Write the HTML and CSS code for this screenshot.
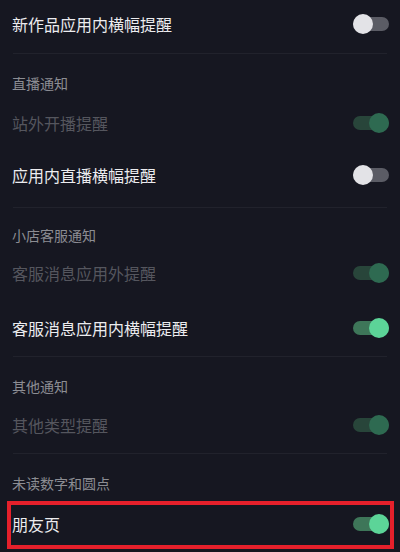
FILE: index.html
```html
<!DOCTYPE html>
<html lang="zh-CN">
<head>
<meta charset="utf-8">
<title>通知设置</title>
<link rel="stylesheet" href="styles.css">
</head>
<body>
<div class="list">
  <div class="row r1"><span class="label">新作品应用内横幅提醒</span><span class="toggle off"><span class="knob"></span></span></div>
  <div class="sep s1"></div>
  <div class="hdr h1">直播通知</div>
  <div class="row dim d1"><span class="label">站外开播提醒</span><span class="toggle ondim"><span class="knob"></span></span></div>
  <div class="row r2"><span class="label">应用内直播横幅提醒</span><span class="toggle off"><span class="knob"></span></span></div>
  <div class="sep"></div>
  <div class="hdr h2">小店客服通知</div>
  <div class="row dim d2"><span class="label">客服消息应用外提醒</span><span class="toggle ondim"><span class="knob"></span></span></div>
  <div class="row r3"><span class="label">客服消息应用内横幅提醒</span><span class="toggle on"><span class="knob"></span></span></div>
  <div class="sep"></div>
  <div class="hdr h3">其他通知</div>
  <div class="row dim d3"><span class="label">其他类型提醒</span><span class="toggle ondim"><span class="knob"></span></span></div>
  <div class="sep s4"></div>
  <div class="hdr h4">未读数字和圆点</div>
  <div class="row r4 marked"><span class="label">朋友页</span><span class="toggle on"><span class="knob"></span></span></div>
</div>
</body>
</html>
```
FILE: styles.css
```css
html, body {
  margin: 0;
  padding: 0;
  background: #161721;
}
body {
  width: 400px;
  height: 552px;
  overflow: hidden;
  font-family: "Noto Sans CJK SC", "Noto Sans", sans-serif;
}
.list {
  display: flex;
  flex-direction: column;
}
.row {
  display: flex;
  align-items: center;
  justify-content: space-between;
  padding: 0 11px 0 12px;
  font-size: 16px;
  color: #ececef;
}
.row.dim {
  color: #55565e;
}
.label {
  line-height: 1;
}
.r1 { height: 48px; margin-bottom: 5px; }
.sep {
  height: 1px;
  margin: 0 13px;
  background: #21222c;
}
.hdr {
  display: flex;
  align-items: center;
  height: 40px;
  padding: 0 12px;
  font-size: 14px;
  color: #8c8d93;
}
.h1 { margin-top: 9px; }
.d1 { height: 40px; }
.r2 { height: 64px; }
.h2 { margin-top: 7px; }
.d2 { height: 36px; }
.r3 { height: 56px; margin-top: 9px; }
.h3 { margin-top: 9px; }
.d3 { height: 38px; }
.s4 { margin-top: 9px; }
.h4 { margin-top: 9px; }
.r4 { height: 42px; }
.marked {
  position: relative;
}
.marked::after {
  content: "";
  position: absolute;
  top: -2px;
  bottom: -4px;
  left: 7px;
  right: 6px;
  border: 4px solid #e5202b;
}
.toggle {
  position: relative;
  width: 36px;
  height: 20px;
  flex: none;
}
.toggle::before {
  content: "";
  position: absolute;
  left: 0;
  right: 0;
  top: 3px;
  height: 14px;
  border-radius: 7px;
}
.knob {
  position: absolute;
  top: 0;
  width: 20px;
  height: 20px;
  border-radius: 50%;
}
.toggle.off::before { background: #5b5c65; }
.toggle.off .knob { left: 0; background: #e3e3e7; }
.toggle.on::before { background: #3e7659; }
.toggle.on .knob { right: 0; background: #5cd498; }
.toggle.ondim::before { background: #28453a; }
.toggle.ondim .knob { right: 0; background: #2e6a51; }
```
